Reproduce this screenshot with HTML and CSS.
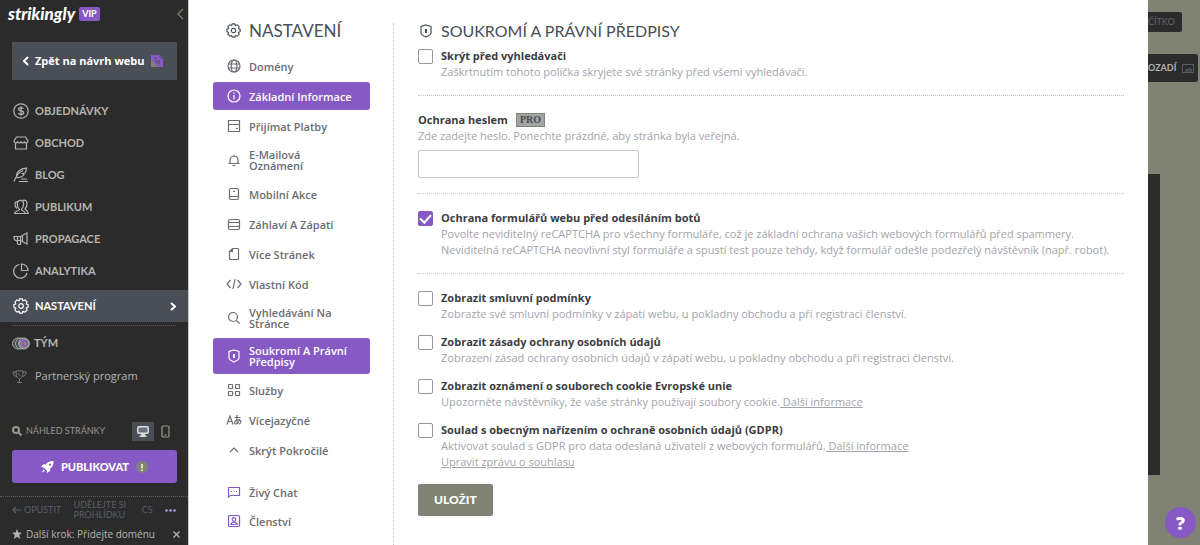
FILE: index.html
```html
<!DOCTYPE html>
<html lang="cs">
<head>
  <meta charset="UTF-8">
  <meta name="viewport" content="width=device-width, initial-scale=1.0">
  <title>Nastavení</title>
  <link rel="stylesheet" href="styles.css">
</head>
<body>
  <aside class="sidebar">
    <div class="brand">
      <span class="logo">strikingly</span>
      <span class="vip">VIP</span>
      <button class="collapse" aria-label="Sbalit"><svg class="icon" width="7" height="12" viewBox="0 0 7 12"><path d="M6 1L1 6l5 5"/></svg></button>
    </div>

    <a class="back" href="#">
      <svg class="icon bold" width="7" height="10" viewBox="0 0 7 10"><path d="M6 1L2 5l4 4"/></svg>
      <span>Zpět na návrh webu</span>
      <svg width="12" height="12" viewBox="0 0 12 12"><path d="M0 0h9l3 3v9H0z" fill="#8659c4"/><path d="M0 5l7 7H0z" fill="#808274"/><path d="M9 0v3h3M3 3h3M4 6h5M5 8h4" fill="none" stroke="#4a4e57"/></svg>
    </a>

    <nav class="main-nav">
      <a href="#"><svg class="icon" width="16" height="16" viewBox="0 0 16 16"><circle cx="8" cy="8" r="7.2"/><path d="M10.500 5.800C10 4.800 9 4.600 8 4.600c-1.500 0-2.500.6-2.500 1.700C5.500 8.800 10.600 7 10.600 9.700c0 1.100-1.100 1.700-2.600 1.700-1.200 0-2.200-.4-2.700-1.300M8 3.200v9.600"/></svg>OBJEDNÁVKY</a>
      <a href="#"><svg class="icon" width="16" height="16" viewBox="0 0 16 16"><path d="M3.500 2h9L15 6c0 2.500-3.500 2.500-3.500.3C11.500 8.500 8 8.500 8 6.300 8 8.500 4.500 8.500 4.500 6.300 4.500 8.500 1 8.500 1 6zM2.500 8.500V14h11V8.500"/></svg>OBCHOD</a>
      <a href="#"><svg class="icon" width="16" height="16" viewBox="0 0 16 16"><path d="M1 14.500C3 9 6 5 10 3.500M3.500 10C3 5 7 1.500 13.500 1.200 13 3 13.500 4 12 6L9.500 6.500l1.500 1C9.500 9.800 7 10.800 3.500 10.500M6 14.500h9M8 12h6"/></svg>BLOG</a>
      <a href="#"><svg class="icon" width="16" height="16" viewBox="0 0 16 16"><path d="M6.500 10.500C4.800 9 4.200 6.500 4.300 4.800 4.400 2.600 5.500 1.300 7.500 1.300s3.100 1.400 3.100 3.500c0 2-.5 4-2.200 5.700.2 1.500 3.600 1 4.100 4H1.500c.2-3 4.800-2.500 5-4zM10 1.300c3-.5 4 1.200 4 3.500 0 2-.7 3.700-2 5 .3 1.200 2.800 1.200 3.200 4.700h-2.700M5 2.500C2.800 2.300 2 3.700 2 5.300c0 1.700.8 3.200 2 4.200"/></svg>PUBLIKUM</a>
      <a href="#"><svg class="icon" width="16" height="16" viewBox="0 0 16 16"><path d="M1 5.500h6.500L14 2v11L7.500 9.500H3C1.500 9.500 1 8 1 5.500zM7.500 5.500v8H5L3.800 9.500M4.500 5.500v4M14 6v3M9.500 5v5.500"/></svg>PROPAGACE</a>
      <a href="#"><svg class="icon" width="16" height="16" viewBox="0 0 16 16"><path d="M6.500 1.500A6.800 6.800 0 1 0 14 10M8.500 1v6.500H15A6.500 6.500 0 0 0 8.500 1z"/></svg>ANALYTIKA</a>
      <a class="active" href="#"><svg class="icon" width="16" height="16" viewBox="0 0 16 16"><path d="M6.700.9h2.600l.6 1.800 2.100-.8L14 3.900l-.8 2.100 1.900.7v2.600l-1.900.7.8 2.100-2 2-2.100-.8-.6 1.800H6.700l-.6-1.800-2.100.8-2-2 .8-2.100-1.900-.7V6.700L2.800 6 2 3.900l2-2 2.100.8z"/><circle cx="8" cy="8" r="2.300"/></svg>NASTAVENÍ<svg class="icon bold chevron" width="6" height="9" viewBox="0 0 6 9"><path d="M1 1l4 3.500L1 8"/></svg></a>
    </nav>

    <nav class="extra-nav">
      <a class="team" href="#"><svg width="18" height="13" viewBox="0 0 18 13"><circle cx="6" cy="6.500" r="5.500" fill="#4a4e57" stroke="#a9a9a5"/><circle cx="9" cy="6.500" r="5.500" fill="#4a4e57" stroke="#a9a9a5"/><circle cx="12" cy="6.500" r="5.500" fill="#8b8c83" stroke="#a9a9a5"/><path d="M8.500 3l3 1-1 3 2 3M13 3l2 3-1 3" stroke="#8659c4" stroke-width="2" fill="none"/></svg>TÝM</a>
      <a href="#"><svg width="15" height="15" viewBox="0 0 15 15" fill="none" stroke="#7b7c76"><path d="M4 2h7c0 5-1 7-3.500 8C5 9 4 7 4 2zM4 3H1c0 3 1 4 4 4.500M11 3h3c0 3-1 4-4 4.500M7.500 10v3M5 13.500h5M5.500 4l3 3"/></svg>Partnerský program</a>
    </nav>

    <div class="preview">
      <svg class="icon bold" width="10" height="10" viewBox="0 0 10 10"><circle cx="4" cy="4" r="3"/><path d="M6.300 6.300L9.500 9.500"/></svg>
      <span>NÁHLED STRÁNKY</span>
      <button class="device selected" aria-label="Počítač"><svg width="12" height="11" viewBox="0 0 12 11"><path d="M1.800.8h8.400q1 0 1 1v4.400q0 1-1 1H1.800q-1 0-1-1V1.800q0-1 1-1z" fill="#6d7077" stroke="#ddd" stroke-width="1.500"/><path d="M4 8h4v1.500h1.500V11h-7V9.500H4z" fill="#ddd"/></svg></button>
      <button class="device" aria-label="Mobil"><svg class="icon" width="9" height="13" viewBox="0 0 9 13"><rect x="1" y="1" width="7" height="11" rx="1"/><path d="M3.500 10h2"/></svg></button>
    </div>

    <button class="publish">
      <svg width="13" height="12" viewBox="0 0 13 12"><path d="M12.500 0C9 0 6.500 1 4.800 3.200L2 3.500 0 6l2.800.5 3 3L6.300 12l2.700-2 .3-2.500C11.500 6 12.600 3.500 12.500 0zM2.500 8.200L.8 11.500 4 10z" fill="#fff"/><circle cx="9" cy="3.700" r="1.100" fill="#8659c4"/></svg>
      <span>PUBLIKOVAT</span>
      <span class="notice">!</span>
    </button>

    <div class="footer-links">
      <a href="#" class="leave"><svg class="icon" width="9" height="8" viewBox="0 0 9 8"><path d="M9 4H1M4 1L1 4l3 3"/></svg>OPUSTIT</a>
      <a href="#" class="tour">UDĚLEJTE SI PROHLÍDKU</a>
      <a href="#">CS</a>
      <button class="more" aria-label="Více"><svg width="11" height="3" viewBox="0 0 11 3" fill="#b99be6"><circle cx="1.500" cy="1.500" r="1.300"/><circle cx="5.500" cy="1.500" r="1.300"/><circle cx="9.500" cy="1.500" r="1.300"/></svg></button>
    </div>

    <div class="next-step">
      <svg width="10" height="10" viewBox="0 0 10 10"><path d="M5 0l1.300 3.500L10 3.700 7.200 6l1 4L5 7.800 1.800 10l1-4L0 3.700l3.700-.2z" fill="#b5b5b2"/></svg>
      <span>Další krok: Přidejte doménu</span>
      <button aria-label="Zavřít"><svg class="icon" width="7" height="7" viewBox="0 0 7 7"><path d="M.5.5l6 6M6.500.5l-6 6"/></svg></button>
    </div>
  </aside>

  <main class="dialog">
    <div class="settings-nav">
      <h1><svg class="icon" width="15" height="15" viewBox="0 0 16 16"><path d="M6.700.9h2.600l.6 1.800 2.100-.8L14 3.900l-.8 2.100 1.900.7v2.600l-1.900.7.8 2.100-2 2-2.100-.8-.6 1.800H6.700l-.6-1.800-2.100.8-2-2 .8-2.100-1.900-.7V6.700L2.800 6 2 3.900l2-2 2.100.8z"/><circle cx="8" cy="8" r="2.300"/></svg>NASTAVENÍ</h1>
      <nav>
        <a href="#"><svg class="icon" width="14" height="14" viewBox="0 0 14 14"><circle cx="7" cy="7" r="6"/><ellipse cx="7" cy="7" rx="2.800" ry="6"/><path d="M1.500 5h11M1.500 9h11"/></svg>Domény</a>
        <a class="active" href="#"><svg class="icon" width="14" height="14" viewBox="0 0 14 14"><circle cx="7" cy="7" r="6"/><path d="M7 6v4.500M7 3.500v1.300"/></svg>Základní Informace</a>
        <a href="#"><svg class="icon" width="14" height="14" viewBox="0 0 14 14"><path d="M1.500 1.500h11v11h-11zM1.500 5.500h11M9 9.500h2"/></svg>Přijímat Platby</a>
        <a class="tall" href="#"><svg class="icon" width="14" height="14" viewBox="0 0 14 14"><path d="M1.500 10.500h11M3 10.500V7c0-5 8-5 8 0v3.500M7 3.300V1.500M5.500 12.500h3"/></svg><span>E-Mailová<br>Oznámení</span></a>
        <a href="#"><svg class="icon" width="14" height="14" viewBox="0 0 14 14"><rect x="2.500" y="1.500" width="9" height="11" rx="1.500"/><path d="M2.500 9.500h9M6 4.500h2"/></svg>Mobilní Akce</a>
        <a href="#"><svg class="icon" width="14" height="14" viewBox="0 0 14 14"><rect x="1.500" y="2.500" width="11" height="10" rx="1.500"/><path d="M1.500 5.500h11M1.500 9.500h11"/></svg>Záhlaví A Zápatí</a>
        <a href="#"><svg class="icon" width="14" height="14" viewBox="0 0 14 14"><path d="M5.500 1.500h5q1 0 1 1v9q0 1-1 1h-7q-1 0-1-1v-7zM5.500 1.500v3h-3"/></svg>Více Stránek</a>
        <a href="#"><svg class="icon" width="16" height="12" viewBox="0 0 16 12"><path d="M4.500 2L1 6l3.500 4M11.500 2L15 6l-3.500 4M9 1L7 11"/></svg>Vlastní Kód</a>
        <a class="tall" href="#"><svg class="icon" width="14" height="14" viewBox="0 0 14 14"><circle cx="6" cy="6" r="4.500"/><path d="M9.300 9.300l3.200 3.200"/></svg>Vyhledávání Na Stránce</a>
        <a class="tall active" href="#"><svg class="icon" width="14" height="14" viewBox="0 0 14 14"><path d="M7 1l5 1.500V9c0 2-3 3-5 4-2-1-5-2-5-4V2.500z"/><path class="bold" d="M7 5v4"/></svg>Soukromí A Právní Předpisy</a>
        <a href="#"><svg class="icon" width="14" height="14" viewBox="0 0 14 14"><rect x="1.500" y="1.500" width="4" height="4" rx=".5"/><rect x="8.500" y="1.500" width="4" height="4" rx=".5"/><rect x="1.500" y="8.500" width="4" height="4" rx=".5"/><rect x="8.500" y="8.500" width="4" height="4" rx=".5"/></svg>Služby</a>
        <a href="#"><svg class="icon" width="16" height="12" viewBox="0 0 16 12"><path d="M1 10.500L4 2l3 8.500M2 7.500h4M8.500 3.500h6M11 1c-.5 4-.2 6.500.5 9M13.500 5c-.5 3-2 5-4 5-1.500 0-1.500-3 1.500-4 3-.8 4 .7 3.800 2-.2 1.300-1 2-2 2.300"/></svg>Vícejazyčné</a>
        <a href="#"><svg class="icon" width="12" height="8" viewBox="0 0 12 8"><path d="M2 6l4-4 4 4"/></svg>Skrýt Pokročilé</a>
      </nav>
      <nav class="support">
        <a href="#"><svg class="icon" width="14" height="14" viewBox="0 0 14 14"><path d="M1.500 2.500h11v8h-9l-2 1.500z"/><path d="M4 6.500h1M6.500 6.500h1M9 6.500h1"/></svg>Živý Chat</a>
        <a href="#"><svg class="icon" width="14" height="14" viewBox="0 0 14 14"><rect x="1.500" y="1.500" width="11" height="11" rx="1"/><circle cx="7" cy="5.500" r="1.800"/><path d="M3.800 10.500c.7-3 5.700-3 6.400 0z"/></svg>Členství</a>
      </nav>
    </div>

    <form class="content">
      <h2><svg class="icon" width="14" height="14" viewBox="0 0 14 14"><path d="M7 1l5 1.500V9c0 2-3 3-5 4-2-1-5-2-5-4V2.500z"/><path class="bold" d="M7 5v4"/></svg>SOUKROMÍ A PRÁVNÍ PŘEDPISY</h2>

      <section>
        <div class="option">
          <input type="checkbox" id="hide">
          <div>
            <label for="hide">Skrýt před vyhledávači</label>
            <p>Zaškrtnutím tohoto políčka skryjete své stránky před všemi vyhledávači.</p>
          </div>
        </div>
      </section>

      <section>
        <div class="field-title"><label for="password">Ochrana heslem</label><span class="pro">PRO</span></div>
        <p>Zde zadejte heslo. Ponechte prázdné, aby stránka byla veřejná.</p>
        <input type="text" id="password">
      </section>

      <section>
        <div class="option">
          <input type="checkbox" id="captcha" checked>
          <div>
            <label for="captcha">Ochrana formulářů webu před odesíláním botů</label>
            <p>Povolte neviditelný reCAPTCHA pro všechny formuláře, což je základní ochrana vašich webových formulářů před spammery.<br>Neviditelná reCAPTCHA neovlivní styl formuláře a spustí test pouze tehdy, když formulář odešle podezřelý návštěvník (např. robot).</p>
          </div>
        </div>
      </section>

      <section class="policies">
        <div class="option">
          <input type="checkbox" id="terms">
          <div>
            <label for="terms">Zobrazit smluvní podmínky</label>
            <p>Zobrazte své smluvní podmínky v zápatí webu, u pokladny obchodu a při registraci členství.</p>
          </div>
        </div>
        <div class="option">
          <input type="checkbox" id="privacy">
          <div>
            <label for="privacy">Zobrazit zásady ochrany osobních údajů</label>
            <p>Zobrazení zásad ochrany osobních údajů v zápatí webu, u pokladny obchodu a při registraci členství.</p>
          </div>
        </div>
        <div class="option">
          <input type="checkbox" id="cookie">
          <div>
            <label for="cookie">Zobrazit oznámení o souborech cookie Evropské unie</label>
            <p>Upozorněte návštěvníky, že vaše stránky používají soubory cookie.<a href="#">&nbsp;Další informace</a></p>
          </div>
        </div>
        <div class="option">
          <input type="checkbox" id="gdpr">
          <div>
            <label for="gdpr">Soulad s obecným nařízením o ochraně osobních údajů (GDPR)</label>
            <p>Aktivovat soulad s GDPR pro data odeslaná uživateli z webových formulářů.<a href="#">&nbsp;Další informace</a><br><a href="#">Upravit zprávu o souhlasu</a></p>
          </div>
        </div>
      </section>

      <button type="button" class="save">ULOŽIT</button>
    </form>
  </main>

  <div class="backdrop">
    <div class="tool small">ČÍTKO</div>
    <div class="tool">OZADÍ<svg width="12" height="9" viewBox="0 0 12 9" fill="none" stroke="#5a5e67"><path d="M.5.5h11v8H.5zM3 7l2-2 1 1 2-2 2 3z"/></svg></div>
    <div class="page-block"></div>
    <button class="help" aria-label="Nápověda">?</button>
  </div>
</body>
</html>
```
FILE: styles.css
```css
* {
  box-sizing: border-box;
}

body {
  margin: 0;
  display: flex;
  min-height: 100vh;
  font-family: "Open Sans", "Noto Sans", sans-serif;
  font-size: 11px;
  line-height: 16px;
  color: #4a4e57;
  background: #808274;
}

a {
  color: inherit;
  text-decoration: none;
}

button {
  padding: 0;
  border: none;
  background: none;
  color: inherit;
  font: inherit;
  cursor: pointer;
}

svg {
  flex: none;
}

.icon {
  fill: none;
  stroke: currentColor;
  stroke-width: 1.2;
}

.bold {
  stroke-width: 2;
}

/* Left sidebar */
.sidebar {
  flex: none;
  width: 189px;
  display: flex;
  flex-direction: column;
  background: #2b2b2b;
  color: #b5b5b2;
  border-right: 1px solid #c8c8c8;
}

.brand {
  display: flex;
  align-items: center;
  height: 28px;
  padding: 0 4px 0 8px;
  color: #fff;
}

.logo {
  font-family: Lato, sans-serif;
  font-size: 17px;
  font-style: italic;
  font-weight: 900;
}

.vip {
  margin-left: 4px;
  padding: 0 3px;
  border-radius: 2px;
  background: #8659c4;
  font-family: Lato, sans-serif;
  font-size: 9px;
  font-weight: 700;
  line-height: 14px;
}

.collapse {
  display: flex;
  margin-left: auto;
  color: #808274;
}

.back {
  display: flex;
  align-items: center;
  gap: 6px;
  height: 38px;
  margin: 14px 11px 0 12px;
  padding: 0 10px;
  background: #4a4e57;
  color: #fff;
  font-weight: 700;
  white-space: nowrap;
}

.main-nav {
  display: flex;
  flex-direction: column;
  margin-top: 15px;
  font-family: Lato, sans-serif;
  font-weight: 700;
}

.main-nav a {
  display: flex;
  align-items: center;
  gap: 6px;
  height: 32px;
  padding: 0 12px 0 13px;
}

.main-nav .active {
  margin-top: 3px;
  background: #4a4e57;
  color: #fff;
}

.chevron {
  margin-left: auto;
}

.extra-nav {
  margin: 3px 12px 0;
  border-top: 1px dotted #5a5c5c;
}

.extra-nav a {
  display: flex;
  align-items: center;
  gap: 8px;
  height: 32px;
}

.extra-nav .team {
  height: 34px;
  gap: 4px;
  font-family: Lato, sans-serif;
  font-weight: 700;
}

.preview {
  display: flex;
  align-items: center;
  height: 20px;
  margin-top: 29px;
  padding: 0 12px;
  font-family: Lato, sans-serif;
  font-size: 9px;
  color: #96978e;
}

.preview span {
  flex: 1;
  margin-left: 4px;
}

.device {
  display: flex;
  align-items: center;
  justify-content: center;
  width: 22px;
  height: 19px;
}

.selected {
  background: #4a4e57;
}

.publish {
  display: flex;
  align-items: center;
  justify-content: center;
  gap: 7px;
  height: 33px;
  margin: 9px 11px 0 12px;
  border-radius: 3px;
  background: #8659c4;
  color: #fff;
  font-family: Lato, sans-serif;
  font-weight: 900;
}

.notice {
  width: 12px;
  height: 12px;
  border-radius: 50%;
  background: #808274;
  font-size: 10px;
  line-height: 12px;
}

.footer-links {
  display: flex;
  align-items: center;
  justify-content: space-between;
  height: 27px;
  margin-top: 13px;
  padding: 0 12px;
  border-top: 1px dotted #5a5c5c;
  font-family: Lato, sans-serif;
  font-size: 9px;
  line-height: 10px;
  color: #5a5e67;
}

.leave {
  display: flex;
  align-items: center;
  gap: 3px;
}

.tour {
  width: 56px;
}

.more {
  display: flex;
}

.next-step {
  display: flex;
  align-items: center;
  height: 22px;
  padding: 0 8px 0 12px;
  font-size: 10px;
  white-space: nowrap;
}

.next-step span {
  flex: 1;
  margin-left: 4px;
}

.next-step button {
  display: flex;
}

/* Settings dialog */
.dialog {
  flex: 1;
  display: flex;
  min-width: 0;
  padding: 23px 24px 0;
  background: #fff;
}

.settings-nav {
  flex: none;
  width: 181px;
  padding-right: 23px;
  border-right: 1px dotted #c4c4c8;
}

.settings-nav h1 {
  display: flex;
  align-items: center;
  gap: 8px;
  height: 15px;
  margin: 0 0 14px;
  padding-left: 13px;
  font-family: Lato, sans-serif;
  font-size: 17px;
  font-weight: 400;
}

.settings-nav nav {
  display: flex;
  flex-direction: column;
  gap: 2px;
}

.settings-nav a {
  display: flex;
  align-items: center;
  height: 28px;
  padding: 0 14px 0 13px;
  line-height: 11px;
  font-weight: 600;
  color: #6b6d72;
}

.settings-nav a svg {
  width: 16px;
  margin-right: 7px;
}

.settings-nav .tall {
  height: 36px;
}

.settings-nav .active {
  border-radius: 3px;
  background: #8659c4;
  color: #fff;
}

.settings-nav .support {
  gap: 1px;
  margin-top: 14px;
}

.support svg {
  color: #8659c4;
}

.content {
  flex: 1;
  min-width: 0;
  padding-left: 24px;
}

.content h2 {
  display: flex;
  align-items: center;
  gap: 8px;
  height: 15px;
  margin: 0 0 10px;
  padding-left: 1px;
  font-family: Lato, sans-serif;
  font-size: 16px;
  font-weight: 400;
}

.content section {
  padding-bottom: 15px;
  margin-bottom: 16px;
  border-bottom: 1px dotted #c4c4c8;
}

.content p {
  margin: 0;
  color: #a3a4ab;
}

.content p a {
  text-decoration: underline;
}

.content label {
  display: block;
  font-weight: 700;
  color: #3b3d44;
}

.option {
  display: flex;
  gap: 8px;
}

.option input {
  flex: none;
  appearance: none;
  width: 15px;
  height: 15px;
  margin: 1px 0 0;
  border: 1px solid #96979e;
  border-radius: 2px;
  background: #fff;
}

.option input:checked {
  display: grid;
  place-items: center;
  border-color: #8659c4;
  background: #8659c4;
}

.option input:checked::after {
  content: "";
  width: 5px;
  height: 9px;
  margin-bottom: 2px;
  border: solid #fff;
  border-width: 0 2px 2px 0;
  transform: rotate(42deg);
}

.field-title {
  display: flex;
  align-items: center;
  gap: 8px;
}

.pro {
  padding: 0 3px;
  border: 1px solid #808274;
  background: #a3a4a5;
  color: #4a4e4a;
  font-family: "Liberation Serif", serif;
  font-size: 10px;
  font-weight: 700;
  line-height: 12px;
}

.content input[type="text"] {
  display: block;
  width: 221px;
  height: 28px;
  margin-top: 6px;
  padding: 0 8px;
  border: 1px solid #c8c8cc;
  border-radius: 2px;
  font: inherit;
}

.content .policies {
  display: flex;
  flex-direction: column;
  gap: 12px;
  margin: 0;
  padding-bottom: 14px;
  border: none;
}

.save {
  height: 32px;
  padding: 0 16px;
  border-radius: 2px;
  background: #808274;
  color: #fff;
  font-family: Lato, sans-serif;
  font-size: 12px;
  font-weight: 900;
}

/* Page behind the dialog */
.backdrop {
  flex: none;
  width: 52px;
  display: flex;
  flex-direction: column;
  align-items: flex-start;
  padding-top: 12px;
}

.tool {
  display: flex;
  align-items: center;
  gap: 6px;
  width: 50px;
  height: 28px;
  border-radius: 0 2px 2px 0;
  background: #2b2b2b;
  color: #b5b5b2;
  font-family: Lato, sans-serif;
  font-size: 9px;
  font-weight: 700;
}

.tool.small {
  width: 34px;
  height: 20px;
  margin-bottom: 22px;
  color: #62656c;
  font-weight: 400;
}

.page-block {
  width: 12px;
  height: 301px;
  margin-top: 92px;
  background: #2b2b2b;
}

/* Floats over the page */
.help {
  position: fixed;
  right: 4px;
  bottom: 7px;
  width: 31px;
  height: 31px;
  border-radius: 50%;
  background: #8659c4;
  color: #fff;
  font-size: 18px;
  font-weight: 800;
}
```
